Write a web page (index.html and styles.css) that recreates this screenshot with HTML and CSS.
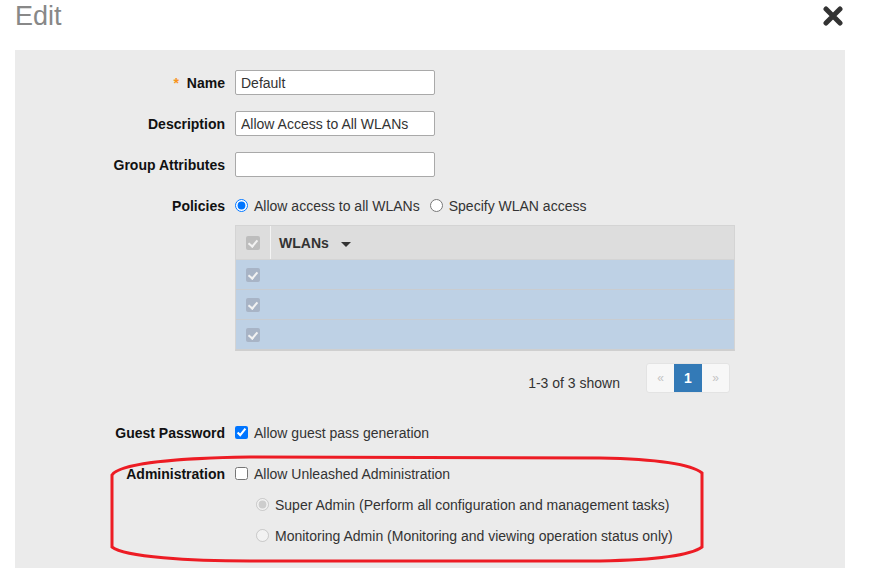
FILE: index.html
```html
<!DOCTYPE html>
<html lang="en">
<head>
    <meta charset="UTF-8">
    <title>Edit</title>
    <link rel="stylesheet" href="styles.css">
</head>
<body>
<div class="page">
    <div class="header">
        <h1>Edit</h1>
        <svg class="close" width="20" height="20" viewBox="0 0 20 20">
            <path d="M3 3 L17 17 M17 3 L3 17" stroke="#333" stroke-width="5" stroke-linecap="round"/>
        </svg>
    </div>

    <div class="panel">
        <div class="row">
            <label class="label"><span class="req">*</span> Name</label>
            <input class="text" type="text" value="Default">
        </div>
        <div class="row">
            <label class="label">Description</label>
            <input class="text" type="text" value="Allow Access to All WLANs">
        </div>
        <div class="row">
            <label class="label">Group Attributes</label>
            <input class="text" type="text" value="">
        </div>
        <div class="row">
            <label class="label">Policies</label>
            <label class="opt"><input type="radio" name="pol" checked> Allow access to all WLANs</label>
            <label class="opt"><input type="radio" name="pol"> Specify WLAN access</label>
        </div>

        <div class="grid">
            <div class="grid-head">
                <div class="cell-check"><span class="fake-check head"></span></div>
                <div class="cell-name">WLANs <span class="caret"></span></div>
            </div>
            <div class="grid-row">
                <div class="cell-check"><span class="fake-check"></span></div>
            </div>
            <div class="grid-row">
                <div class="cell-check"><span class="fake-check"></span></div>
            </div>
            <div class="grid-row last">
                <div class="cell-check"><span class="fake-check"></span></div>
            </div>
        </div>

        <div class="pager">
            <span class="shown">1-3 of 3 shown</span>
            <div class="pages">
                <span class="pg dim">&laquo;</span>
                <span class="pg active">1</span>
                <span class="pg dim">&raquo;</span>
            </div>
        </div>

        <div class="row guest">
            <label class="label">Guest Password</label>
            <label class="opt"><input type="checkbox" checked> Allow guest pass generation</label>
        </div>
        <div class="row">
            <label class="label">Administration</label>
            <label class="opt"><input type="checkbox"> Allow Unleashed Administration</label>
        </div>
        <div class="row sub">
            <label class="opt"><input type="radio" name="adm" checked disabled> Super Admin (Perform all configuration and management tasks)</label>
        </div>
        <div class="row sub">
            <label class="opt"><input type="radio" name="adm" disabled> Monitoring Admin (Monitoring and viewing operation status only)</label>
        </div>
    </div>

    <svg class="mark" width="872" height="586" viewBox="0 0 872 586">
        <path d="M250 457 L600 458 C650 459 690 463 702 473 L702 547 C690 556 650 560 600 561 L250 561 C190 561 125 557 112 547 L112 475 C120 463 180 458 250 457 Z"
              fill="none" stroke="#ed1c24" stroke-width="3"/>
    </svg>
</div>
</body>
</html>
```

FILE: styles.css
```css
body {
    margin: 0;
    background: white;
    font-family: "Liberation Sans", Arial, sans-serif;
    font-size: 14px;
    color: #333;
}

.page {
    position: relative;
    width: 872px;
    height: 586px;
}

.header {
    display: flex;
    justify-content: space-between;
    align-items: flex-start;
    height: 50px;
    padding: 0 29px 0 15px;
}

.header h1 {
    margin: 0;
    font-size: 27px;
    font-weight: normal;
    color: #888;
    line-height: 32px;
}

.close {
    margin-top: 6px;
}

.panel {
    margin-left: 15px;
    width: 830px;
    height: 518px;
    box-sizing: border-box;
    background: #ebebeb;
    padding-top: 20px;
}

.row {
    display: flex;
    align-items: center;
    height: 25px;
    margin-bottom: 16px;
}

.label {
    width: 210px;
    margin-right: 10px;
    text-align: right;
    font-weight: bold;
    color: #111;
}

.req {
    color: #f7941d;
    margin-right: 4px;
}

.text {
    width: 200px;
    height: 25px;
    box-sizing: border-box;
    border: 1px solid #a9a9a9;
    border-radius: 2px;
    padding: 0 5px;
    font-family: inherit;
    font-size: 14px;
    color: #333;
    background: white;
}

.opt {
    display: flex;
    align-items: center;
    margin-right: 10px;
}

.opt input {
    margin: 0 6px 0 0;
    width: 13px;
    height: 13px;
}

.grid {
    margin: -9px 0 0 220px;
    width: 500px;
    border: 1px solid #d4d4d4;
    border-bottom: 2px solid #cfcfcf;
    box-sizing: border-box;
}

.grid-head {
    display: flex;
    height: 33px;
    background: #dddddd;
    border-bottom: 1px solid #d4d4d4;
}

.cell-check {
    width: 34px;
    display: flex;
    align-items: center;
    justify-content: center;
}

.grid-head .cell-check {
    border-right: 1px solid #f4f4f4;
}

.cell-name {
    display: flex;
    align-items: center;
    padding-left: 8px;
    font-weight: bold;
    color: #333;
}

.caret {
    display: inline-block;
    margin-left: 12px;
    margin-top: 3px;
    border-left: 5px solid transparent;
    border-right: 5px solid transparent;
    border-top: 5px solid #333;
}

.grid-row {
    display: flex;
    height: 29px;
    background: #bed1e5;
    border-bottom: 1px solid #c9ccd0;
}

.grid-row.last {
    border-bottom: none;
}

.fake-check {
    position: relative;
    width: 14px;
    height: 14px;
    border-radius: 2px;
    background: #a8b4c6;
}

.fake-check.head {
    background: #bdbdbd;
}

.fake-check::after {
    content: "";
    position: absolute;
    left: 4px;
    top: 2px;
    width: 4px;
    height: 7px;
    border-right: 2px solid #f2f2f2;
    border-bottom: 2px solid #f2f2f2;
    transform: rotate(40deg);
}

.pager {
    display: flex;
    justify-content: flex-end;
    align-items: center;
    width: 715px;
    margin-top: 12px;
}

.shown {
    margin-right: 26px;
    margin-top: 10px;
}

.pages {
    display: flex;
    border: 1px solid #e3e3e3;
    border-radius: 3px;
    background: #f7f7f7;
    height: 30px;
    box-sizing: border-box;
}

.pg {
    width: 27px;
    display: flex;
    align-items: center;
    justify-content: center;
    font-size: 12px;
}

.pg.dim {
    color: #c4c4c4;
}

.pg.active {
    width: 28px;
    background: #337ab7;
    color: white;
    font-weight: bold;
    font-size: 14px;
}

.row.guest {
    margin-top: 27px;
}

.row.sub {
    margin: -10px 0 16px 241px;
}

.mark {
    position: absolute;
    left: 0;
    top: 0;
    pointer-events: none;
}
```
